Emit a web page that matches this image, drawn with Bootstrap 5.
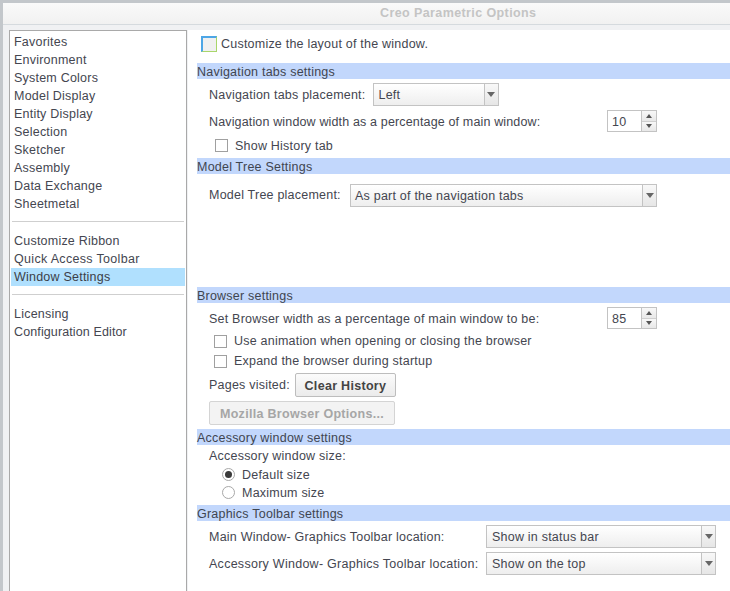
<!DOCTYPE html>
<html lang="en">
<head>
<meta charset="utf-8">
<title>Creo Parametric Options</title>
<link href="https://cdn.jsdelivr.net/npm/bootstrap@5.3.0/dist/css/bootstrap.min.css" rel="stylesheet">
<style>
html,body{height:591px;overflow:hidden;margin:0}
body{font-family:"Liberation Sans",Arial,sans-serif;font-size:12.5px;line-height:18px;color:#444650;background:#f0f1f3;letter-spacing:.22px}
.win{height:591px;border-top:3px solid #c3c7cb;border-left:3px solid #c3c7cb}
.titlebar{height:22px;background:linear-gradient(#fafafa,#f1f1f1);border-bottom:1px solid #d5dade;font-weight:700;color:#c4c4c4;padding-left:377px;font-size:12.5px;line-height:21px;letter-spacing:.4px}
.main{padding-top:5px;height:566px}
.side{width:178px;margin-left:6px;margin-right:1px;height:561px;border:1px solid #a9a9a9;border-bottom:0;background:#fff;padding:2px 1px 0 1px;flex:none}
.side-item{height:18px;padding-left:3px;line-height:18px}
.side-item.on{background:#b0e0fe;color:#3c3e48}
.side-sep{height:1px;background:#cfcfcf;margin:8px 1px 10px 1px}
.wide{letter-spacing:.32px}
.tight{letter-spacing:.12px}
.content{flex:1 1 auto;background:#fff;padding-left:9px;height:561px;min-width:0}
.head{height:16px;line-height:18px;background:#c2d7fc;color:#3f4550}
.r{padding-left:12px}
.r-top{height:33px;padding:0 0 6px 4px}
.cbx{width:13px;height:13px;border:1px solid #a0a0a0;background:#fff;flex:none;margin-right:7px}
.big{width:16px;height:16px;border:1px solid;border-color:#4da6e6 #a9d66a #a9d66a #4da6e6;border-width:2px 1px 1px 2px;background:#f0f0f0;margin-right:4px;flex:none}
.sel{height:23px;border:1px solid #c3c3c3;background:linear-gradient(#fff,#eeeeee);flex:none;padding-left:5px;line-height:21px}
.sel .t{flex:1 1 auto;padding-top:1px}
.sel .arr{width:14px;height:100%;border-left:1px solid #c3c3c3;background:linear-gradient(#f8f8f8,#e6e6e6);flex:none}
.arr::after{content:"";border:4px solid transparent;border-top:5px solid #666;border-bottom:0}
.sel-left{width:126px;margin-left:7px}
.sel-tree{width:307px;padding-left:4px}
.sel-g{width:230px}
.spin{width:50px;height:22px;border:1px solid #c3c3c3;background:#fff;flex:none;padding-left:4px;line-height:20px}
.spin .t{flex:1 1 auto;padding-top:1px}
.spin .sb{width:15px;height:100%;border-left:1px solid #c3c3c3;flex:none}
.sb i{flex:1 1 0;background:linear-gradient(#f8f8f8,#e8e8e8);display:flex;align-items:center;justify-content:center}
.sb i:first-child{border-bottom:1px solid #cfcfcf}
.up::after{content:"";border:3px solid transparent;border-bottom:4px solid #555;border-top:0}
.dn::after{content:"";border:3px solid transparent;border-top:4px solid #555;border-bottom:0}
.pb{height:24px;border:1px solid #bdbdbd;border-radius:2px;background:linear-gradient(#fbfbfb,#ebebeb);font-weight:700;color:#444;font-size:12.5px;padding:1px 0 0;line-height:22px;letter-spacing:.3px;text-align:center}
.pb:disabled{color:#a6a6a6;border-color:#d4d4d4;background:#f3f3f3;opacity:1}
.pb-clear{width:101px;margin-left:5px}
.pb-moz{width:186px}
.rad{width:13px;height:13px;border-radius:50%;border:1px solid #a8a8a8;background:#fff;flex:none;margin-right:7px;display:flex;align-items:center;justify-content:center}
.rad.on::after{content:"";width:7px;height:7px;border-radius:50%;background:#3a3a3a}
.row-sel{margin-top:4px;height:23px}
.row-spin{margin-top:4px;height:22px;width:460px}
.row-hist{height:26px;padding-left:18px}
.row-tree{margin-top:10px;height:23px;width:460px;margin-bottom:80px}
.row-chk{height:20px;padding-left:17px}
.first-chk{margin-top:2px}
.row-pages{height:24px;margin-top:2px}
.row-moz{height:24px;margin-top:4px}
.gap-head{margin-top:4px}
.row-size{height:20px}
.row-rad{height:18px;padding-left:25px}
.row-g{margin-top:4px;height:23px;width:519px}
.lb-down{padding-top:2px}
.lb-up{padding-bottom:2px}
.lb-narrow{letter-spacing:.15px}
.lb-wide{letter-spacing:.27px}
</style>
</head>
<body>
<div class="win">
  <div class="titlebar">Creo Parametric Options</div>
  <div class="main d-flex">
    <div class="side">
      <div class="side-item">Favorites</div>
      <div class="side-item">Environment</div>
      <div class="side-item">System Colors</div>
      <div class="side-item">Model Display</div>
      <div class="side-item">Entity Display</div>
      <div class="side-item">Selection</div>
      <div class="side-item">Sketcher</div>
      <div class="side-item">Assembly</div>
      <div class="side-item">Data Exchange</div>
      <div class="side-item">Sheetmetal</div>
      <div class="side-sep"></div>
      <div class="side-item">Customize Ribbon</div>
      <div class="side-item wide">Quick Access Toolbar</div>
      <div class="side-item on">Window Settings</div>
      <div class="side-sep"></div>
      <div class="side-item">Licensing</div>
      <div class="side-item tight">Configuration Editor</div>
    </div>
    <div class="content">
      <div class="r-top d-flex align-items-center"><span class="big"></span>Customize the layout of the window.</div>

      <div class="head">Navigation tabs settings</div>
      <div class="r row-sel d-flex align-items-center">Navigation tabs placement:
        <div class="sel sel-left d-flex align-items-center"><span class="t">Left</span><span class="arr d-flex align-items-center justify-content-center"></span></div>
      </div>
      <div class="r row-spin d-flex align-items-center justify-content-between"><span class="lb-down lb-narrow">Navigation window width as a percentage of main window:</span>
        <div class="spin d-flex"><span class="t">10</span><span class="sb d-flex flex-column"><i class="up"></i><i class="dn"></i></span></div>
      </div>
      <div class="r row-hist d-flex align-items-center"><span class="cbx"></span><span class="lb-down">Show History tab</span></div>

      <div class="head">Model Tree Settings</div>
      <div class="r row-tree d-flex align-items-center justify-content-between"><span class="lb-up">Model Tree placement:</span>
        <div class="sel sel-tree d-flex align-items-center"><span class="t">As part of the navigation tabs</span><span class="arr d-flex align-items-center justify-content-center"></span></div>
      </div>

      <div class="head">Browser settings</div>
      <div class="r row-spin d-flex align-items-center justify-content-between"><span class="lb-down">Set Browser width as a percentage of main window to be:</span>
        <div class="spin d-flex"><span class="t">85</span><span class="sb d-flex flex-column"><i class="up"></i><i class="dn"></i></span></div>
      </div>
      <div class="r row-chk first-chk d-flex align-items-center"><span class="cbx"></span>Use animation when opening or closing the browser</div>
      <div class="r row-chk d-flex align-items-center"><span class="cbx"></span>Expand the browser during startup</div>
      <div class="r row-pages d-flex align-items-center">Pages visited:
        <button type="button" class="pb pb-clear">Clear History</button>
      </div>
      <div class="r row-moz d-flex align-items-center">
        <button type="button" class="pb pb-moz" disabled>Mozilla Browser Options...</button>
      </div>

      <div class="head gap-head">Accessory window settings</div>
      <div class="r row-size d-flex align-items-center"><span class="lb-down">Accessory window size:</span></div>
      <div class="r row-rad d-flex align-items-center"><span class="rad on"></span><span class="lb-down">Default size</span></div>
      <div class="r row-rad d-flex align-items-center"><span class="rad"></span><span class="lb-down">Maximum size</span></div>

      <div class="head gap-head">Graphics Toolbar settings</div>
      <div class="r row-g d-flex align-items-center justify-content-between"><span>Main Window- Graphics Toolbar location:</span>
        <div class="sel sel-g d-flex align-items-center"><span class="t">Show in status bar</span><span class="arr d-flex align-items-center justify-content-center"></span></div>
      </div>
      <div class="r row-g d-flex align-items-center justify-content-between"><span class="lb-wide">Accessory Window- Graphics Toolbar location:</span>
        <div class="sel sel-g d-flex align-items-center"><span class="t">Show on the top</span><span class="arr d-flex align-items-center justify-content-center"></span></div>
      </div>
    </div>
  </div>
</div>
</body>
</html>
